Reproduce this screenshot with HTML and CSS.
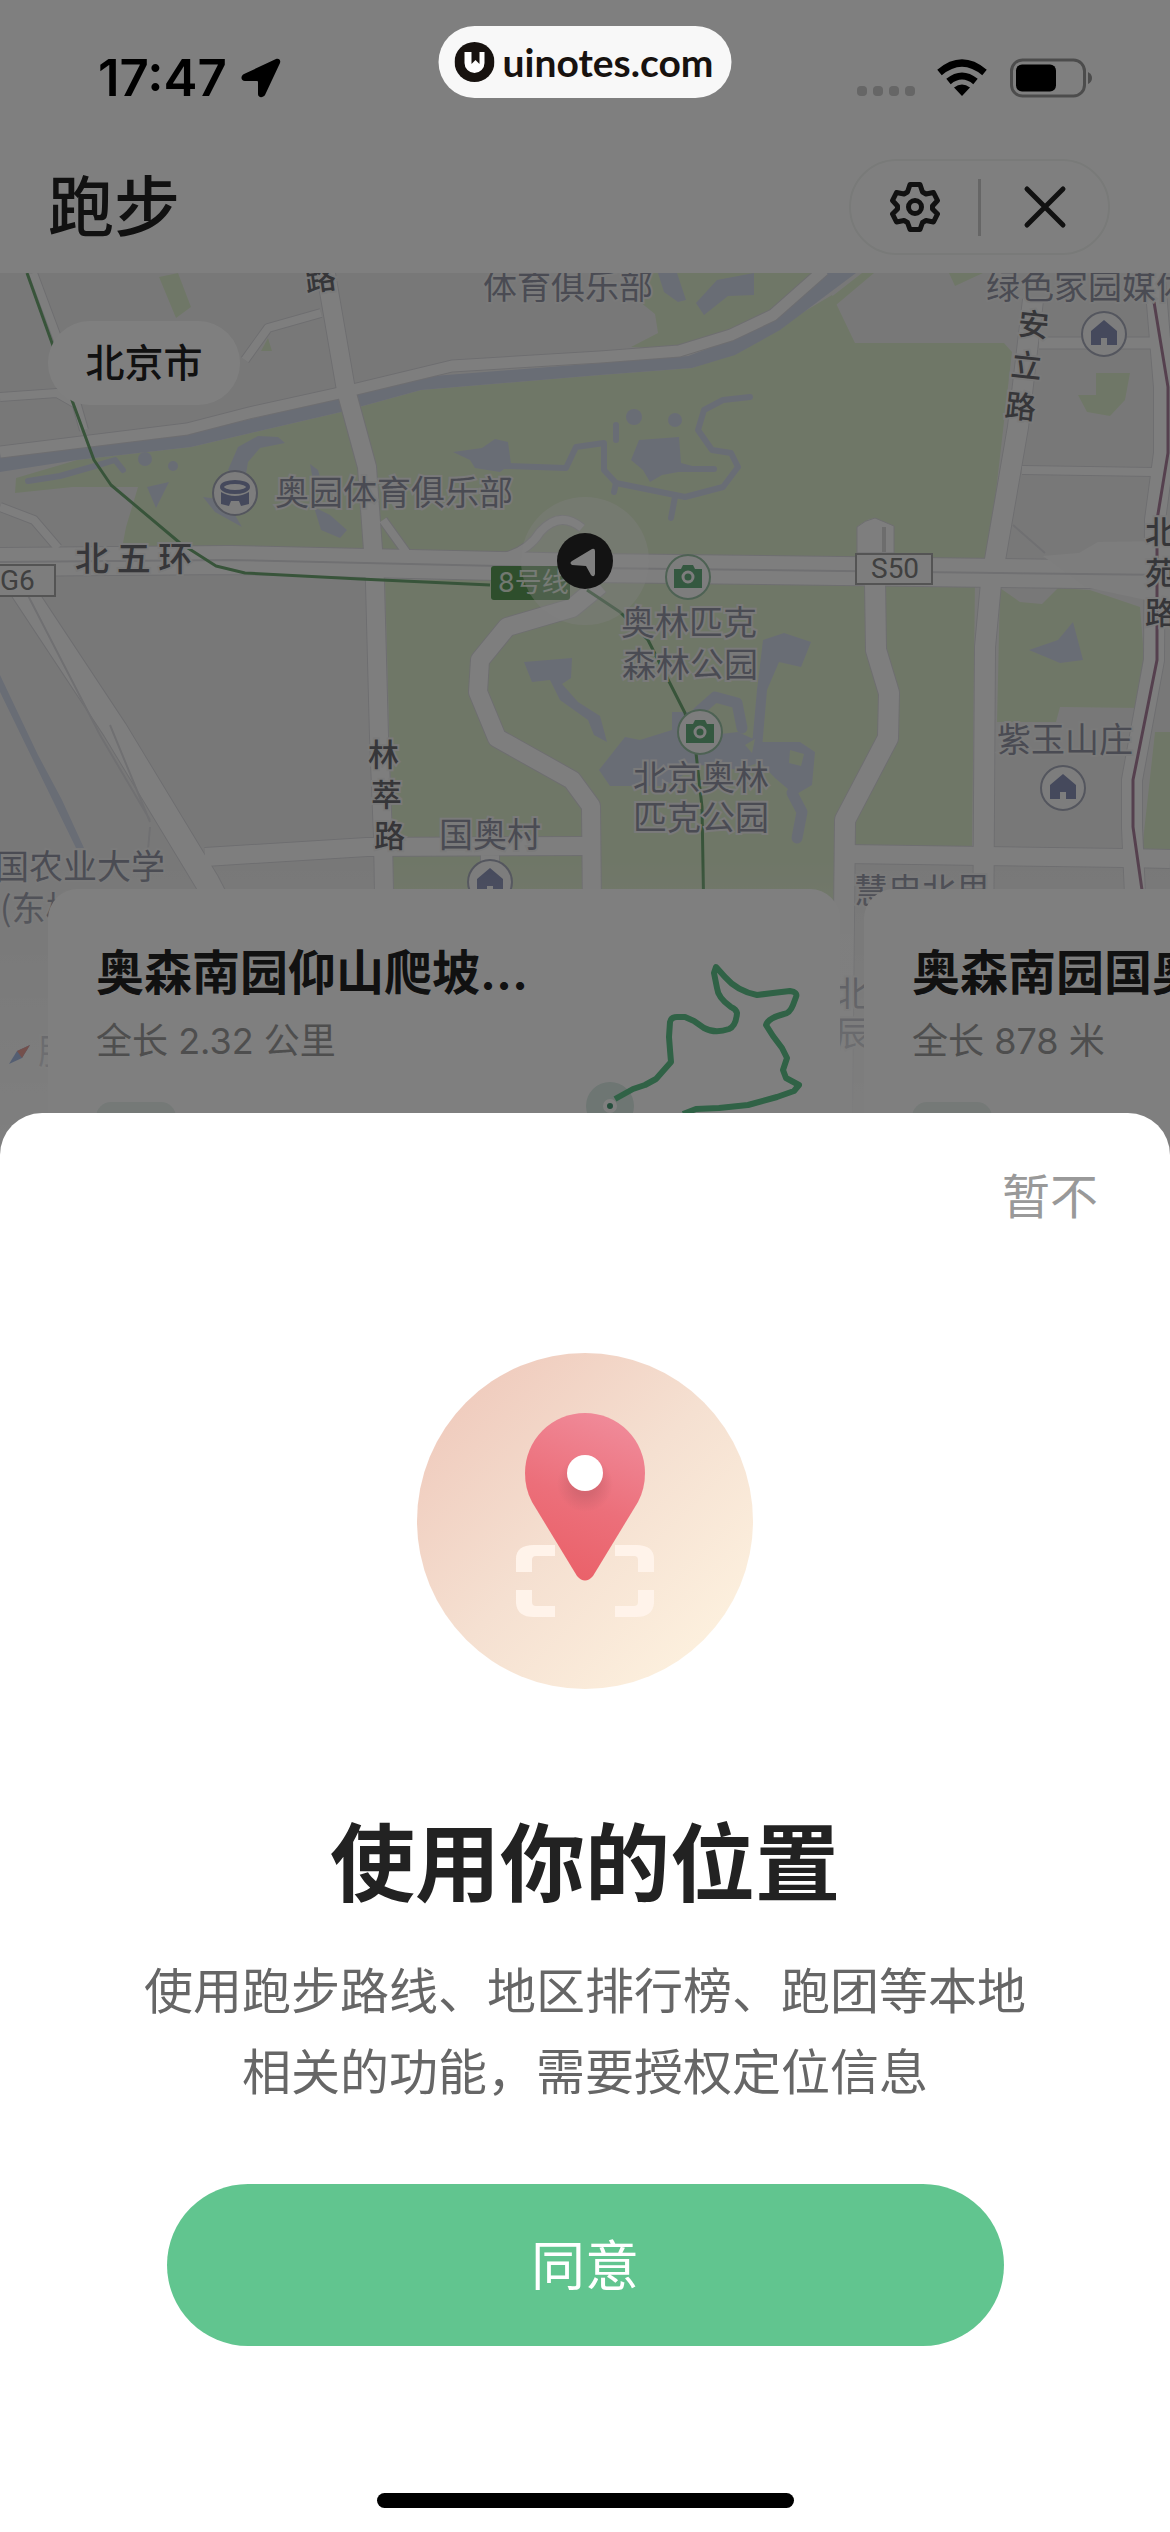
FILE: index.html
```html
<!DOCTYPE html>
<html lang="zh-CN">
<head>
    <meta charset="UTF-8">
    <meta name="viewport" content="width=device-width, initial-scale=1.0">
    <title>跑步</title>
    <link rel="stylesheet" href="styles.css">
</head>
<body>
    <div class="app">
        <div class="status-bar">
            <div class="status-left">
                <span class="time">17:47</span>
                <svg width="40" height="40" viewBox="0 0 40 40"><path d="M35 1 L3 16 C-1 18 0 23 4 23 L16 23 Q17 23 17 24 L17 36 C17 40 22 40 24 37 L39 5 C40 2 38 0 35 1 Z"/></svg>
            </div>
            <div class="status-right">
                <div class="signal"><i></i><i></i><i></i><i></i></div>
                <svg width="52" height="38" viewBox="0 0 52 38">
                    <path d="M26 37 L18 28.500 Q26 22.500 34 28.500 Z"/>
                    <path d="M12.500 22.500 Q26 11.500 39.500 22.500" fill="none" stroke="#000" stroke-width="7"/>
                    <path d="M3.500 13.500 Q26 -5.500 48.500 13.500" fill="none" stroke="#000" stroke-width="7"/>
                </svg>
                <svg width="84" height="40" viewBox="0 0 84 40">
                    <rect x="2.500" y="2" width="73" height="36" rx="11" fill="none" stroke="#999" stroke-width="3"/>
                    <rect x="7" y="6.500" width="40" height="27" rx="6"/>
                    <path d="M79 14 Q83 16 83 20 Q83 24 79 26 Z" fill="#999"/>
                </svg>
            </div>
        </div>

        <header class="header">
            <h1>跑步</h1>
            <div class="capsule">
                <button type="button" aria-label="设置">
                    <svg width="50" height="52" viewBox="0 0 50 52" fill="none" stroke="#222" stroke-width="5" stroke-linejoin="round">
                        <path d="M20 3.500 H30 L32.500 11 L36 13 L43.500 11.500 L47.500 19.500 L42.500 25 V28 L47.500 33 L43.500 41 L36 39.500 L32.500 41.500 L30 48.500 H20 L17.500 41.500 L14 39.500 L6.500 41 L2.500 33 L7.500 28 V25 L2.500 19.500 L6.500 11.500 L14 13 L17.500 11 Z"/>
                        <circle cx="25" cy="26" r="6.500"/>
                    </svg>
                </button>
                <span class="divider"></span>
                <button type="button" aria-label="关闭">
                    <svg width="44" height="44" viewBox="0 0 44 44" fill="none" stroke="#222" stroke-width="5" stroke-linecap="round"><path d="M4 4 L40 40 M40 4 L4 40"/></svg>
                </button>
            </div>
        </header>

        <main class="map">
            <svg class="map-canvas" viewBox="0 273 1170 860" preserveAspectRatio="xMidYMin slice">
                <defs>
                    <g id="poi-home">
                        <circle r="22" fill="#fafafa" stroke="#a8acbc" stroke-width="2"/>
                        <path d="M0 -14 L13 -3 V11 H3 V4 H-3 V11 H-13 V-3 Z" fill="#8a92b8"/>
                    </g>
                    <g id="poi-camera">
                        <circle r="22" fill="#fafafa" stroke="#9cc4a8" stroke-width="2"/>
                        <path d="M-14 -8 H-7 L-5 -12 H5 L7 -8 H14 V11 H-14 Z" fill="#68b080"/>
                        <circle r="5" fill="none" stroke="#fafafa" stroke-width="3"/>
                    </g>
                    <linearGradient id="fade" x1="0" y1="0" x2="0" y2="1">
                        <stop offset="0" stop-color="#fff" stop-opacity="0"/>
                        <stop offset="1" stop-color="#fff" stop-opacity=".92"/>
                    </linearGradient>
                    <g id="roads">
                        <path class="w8" d="M33 273 L59 343 L84 430"/>
                        <path class="w8" d="M0 397 L57 393 L78 405 M245 360 L268 328 L321 313"/>
                        <path class="w8" d="M1022 470 L1154 472 M0 507 L34 520 L58 548 M383 520 L406 552 M500 558 Q528 552 540 532 Q560 510 582 528"/>
                        <path class="w11" d="M0 452 L187 429 L249 413 L344 392 L452 366 L600 357 L679 351 L731 335 L773 315 L824 270"/>
                        <path class="w11" d="M1039 343 L1154 343"/>
                        <path class="w18" d="M325 268 L346 390 L367 467 L373 550 L375 583 L379 737 L383 837 L388 1120"/>
                        <path class="w18" d="M600 585 L572 608 L507 627 L480 660 L478 692 L497 738 L572 780 L591 806 L594 1120"/>
                        <path class="w18" d="M205 857 L367 847 L590 846 M490 850 V870 M845 854 L1125 858 L1170 859"/>
                        <path class="w20" d="M875 580 L876 650 L889 693 L888 738 L845 820 L842 1120"/>
                        <path class="w20" d="M1033 300 L1018 427 L995 560 L991 583 L985 647 L982 1120"/>
                        <path class="w20" d="M1154 268 L1164 387 L1164 453 L1155 520 L1154 660 L1132 780 L1132 827 L1145 1120"/>
                        <path class="w24" d="M0 556 L29 600 L115 730 L207 882 L330 1120"/>
                        <path class="w28" d="M0 562 L230 560 L590 568 L1170 575"/>
                    </g>
                </defs>

                <rect y="273" width="1170" height="860" fill="#f1f1f1"/>

                <g fill="#dfeecf">
                    <path d="M16 478 L77 460 L191 447 L341 412 L421 390 L600 375 L692 368 L735 352 L780 326 L832 295 L855 343 H1004 L1012 352 L987 570 H383 L122 548 L126 527 L138 487 H73 L15 493 Z"/>
                    <path d="M650 273 H826 L770 318 L728 335 L678 350 L631 347 L658 333 L655 314 L640 302 Z"/>
                    <path d="M862 273 H874 L836 305 L830 298 Z M949 273 L983 273 L955 286 Z"/>
                    <path d="M159 277 L178 273 L191 307 L176 318 Z M268 338 L272 351 H261 Z"/>
                    <path d="M1096 373 H1130 L1125 400 L1110 416 L1087 412 L1078 395 H1096 Z"/>
                    <path d="M385 580 H975 L972 847 H848 L835 1120 H400 Z"/>
                    <path d="M1000 588 L1020 602 L1042 604 L1058 588 L1090 590 L1140 607 L1144 657 L1140 708 L1060 707 L1056 722 H997 Z"/>
                    <path d="M1155 732 H1170 V850 H1142 Z"/>
                </g>

                <g fill="#d3daeb">
                    <path d="M0 455 L77 445 L191 433 L341 398 L421 377 L600 363 L688 356 L723 343 L773 318 L826 273 H856 L780 330 L735 355 L692 368 L600 375 L421 390 L341 412 L191 447 L77 460 L0 472 Z"/>
                    <path d="M0 675 L38 755 L62 800 L84 848 H76 L55 805 L34 762 L0 692 Z"/>
                    <path d="M228 470 L238 447 L258 436 L278 437 L285 443 L260 448 L248 462 L245 480 Z M147 487 L169 482 L156 508 Z M203 497 L226 500 L242 527 L215 512 Z M314 507 L330 515 L347 530 L340 538 L321 530 Z M310 464 L318 470 L324 492 L314 486 Z"/>
                    <circle cx="145" cy="459" r="7"/><circle cx="173" cy="466" r="5"/>
                    <path d="M453 452 L482 448 L495 439 L508 442 L511 464 L500 472 L475 468 L470 460 Z"/>
                    <path d="M639 440 L679 437 L681 463 L700 468 L662 475 L650 482 L643 470 L631 460 Z"/>
                    <circle cx="634" cy="417" r="8"/><circle cx="675" cy="420" r="7"/>
                    <path d="M658 273 H677 L686 300 L678 302 L664 292 Z M717 280 L754 273 V295 L728 296 L704 315 L696 303 Z"/>
                    <path d="M599 770 L625 737 L640 740 L672 730 V712 H690 L712 735 L738 732 L760 742 L800 742 L815 752 L812 785 L795 795 L775 778 L760 762 L740 770 L700 765 L665 786 L610 786 Z"/>
                    <path d="M763 640 L784 633 L811 642 L801 667 L779 662 L767 690 L762 748 L752 745 L757 690 Z"/>
                    <path d="M524 662 L572 658 L571 678 L562 684 L578 702 L600 716 L607 742 L594 735 L588 720 L560 700 L550 680 L532 682 Z"/>
                    <path d="M1029 650 L1058 640 L1073 622 L1083 660 L1060 663 Z"/>
                </g>
                <g fill="none" stroke="#d3daeb" stroke-width="6" stroke-linecap="round" stroke-linejoin="round">
                    <path d="M28 481 L60 476 L95 466 L115 460 L123 470"/>
                    <path d="M505 466 L566 468 L576 447 L604 443 V470 L616 483 L685 497 L723 487 L738 467 L731 453 L712 450 L698 430 L704 410 L723 400 L750 397"/>
                    <path d="M616 425 V440 M675 497 L671 518 M679 469 H714 M616 483 L614 492"/>
                    <path d="M698 712 L715 697 L737 703 L742 728" stroke-width="11"/>
                    <path d="M792 793 L802 812 L797 838" stroke-width="11"/>
                </g>
                <path d="M790 750 l14 4 l-3 12 l-12 -3 Z M745 745 l10 -6 l-3 14 Z" fill="#dfeecf"/>

                <g class="road-edge"><use href="#roads"/></g>
                <g class="road-fill"><use href="#roads"/></g>
                <path d="M857 553 V527 Q865 520 875 518 L894 526 V553 Z" fill="#fdfdfd" stroke="#dcdce0"/>
                <path d="M884 527 V552" stroke="#dadada" stroke-width="4"/>
                <path d="M1043 556 L1079 553 L1098 542 L1170 541 V605 L1085 587 Z" fill="#fbfbfb"/>
                <path d="M0 562 L230 560 L590 568 L1170 575 M20 580 L100 735 L150 820 M150 827 L148 850 M1013 525 L1045 553 M110 725 L150 822" fill="none" stroke="#e0e0e4" stroke-width="2"/>

                <g fill="none" stroke="#70a874" stroke-width="3" stroke-linejoin="round">
                    <path d="M27 273 L52 343 L73 403 L94 460 L111 485 L180 543 L216 566 L245 573 L360 579 L490 585"/>
                    <path d="M587 590 L620 612 L648 640 L685 713 L696 753 L702 807 L707 1100"/>
                </g>
                <path d="M1154 302 L1168 387 V453 L1157 520 V660 L1133 780 V827 L1142 890 L1150 1100" fill="none" stroke="#aa819c" stroke-width="3"/>

                <g class="place">
                    <text x="483" y="299">体育俱乐部</text>
                    <text x="986" y="299">绿色家园媒体</text>
                    <text x="275" y="505">奥园体育俱乐部</text>
                    <text x="621" y="635">奥林匹克</text>
                    <text x="622" y="677">森林公园</text>
                    <text x="633" y="790">北京奥林</text>
                    <text x="633" y="830">匹克公园</text>
                    <text x="997" y="752">紫玉山庄</text>
                    <text x="439" y="847">国奥村</text>
                    <text x="-5" y="879">国农业大学</text>
                    <text x="0" y="921">(东校区)</text>
                    <text x="854" y="903">慧忠北里</text>
                    <text x="835" y="1006">北</text>
                    <text x="835" y="1046">辰</text>
                    <text x="38" y="1064">服</text>
                </g>
                <g class="street">
                    <text class="wide" x="75" y="571">北 五 环</text>
                    <text x="305" y="290" transform="rotate(-8 320 280)">路</text>
                    <text x="1018" y="336" transform="rotate(6 1033 325)">安</text>
                    <text x="1011" y="377" transform="rotate(6 1026 366)">立</text>
                    <text x="1005" y="418" transform="rotate(6 1020 407)">路</text>
                    <text x="368" y="766">林</text>
                    <text x="371" y="806">萃</text>
                    <text x="374" y="847">路</text>
                    <text x="1145" y="543">北</text>
                    <text x="1145" y="584">苑</text>
                    <text x="1145" y="624">路</text>
                </g>

                <g fill="#fafafa" stroke="#a8a8a8" stroke-width="2">
                    <rect x="856" y="554" width="76" height="30"/>
                    <rect x="-20" y="565" width="75" height="31"/>
                </g>
                <g class="shield">
                    <text x="871" y="578">S50</text>
                    <text x="0" y="590">G6</text>
                </g>
                <rect x="491" y="566" width="79" height="34" rx="3" fill="#5c9c58"/>
                <text class="metro" x="498" y="592">8号线</text>

                <g transform="translate(235 493)">
                    <circle r="22" fill="#fafafa" stroke="#a8acbc" stroke-width="2"/>
                    <ellipse cy="-6" rx="13" ry="5" fill="none" stroke="#8a92b8" stroke-width="4"/>
                    <path d="M-14 -1 Q0 7 14 -1 V11 L6 13 L4 8 H-4 L-6 13 L-14 11 Z" fill="#8a92b8"/>
                </g>
                <use href="#poi-home" x="1104" y="334"/>
                <use href="#poi-home" x="1063" y="788"/>
                <use href="#poi-home" x="490" y="882"/>
                <use href="#poi-camera" x="688" y="577"/>
                <use href="#poi-camera" x="700" y="732"/>

                <!-- current position -->
                <circle cx="585" cy="561" r="64" fill="#fff" opacity=".38"/>
                <circle cx="585" cy="561" r="28" fill="#262626"/>
                <path d="M572 561 L592 549 Q595 548 595 551 V574 Q594 578 591 575 L586 566 L572 565 Q569 563 572 561 Z" fill="#fff"/>

                <rect y="860" width="1170" height="273" fill="url(#fade)"/>
                <path d="M30 1045 L22 1058 L9 1064 L17 1051 Z" fill="#a8bce4"/>
                <path d="M30 1045 L22 1058 L17 1051 Z" fill="#e8a098"/>
            </svg>

            <button type="button" class="city">北京市</button>

            <div class="routes">
                <article class="route">
                    <div class="route-info">
                        <h2>奥森南园仰山爬坡跑道</h2>
                        <p>全长 2.32 公里</p>
                        <span class="tag"></span>
                    </div>
                    <svg class="track" width="222" height="180" viewBox="582 962 222 180" fill="none">
                        <circle cx="610" cy="1106" r="24" fill="#dcece6"/>
                        <path d="M615 1099 L633 1089 L645 1085 L656 1079 L671 1062 L670 1050 L669 1037 L670 1022 Q671 1017 677 1017 L685 1017 L694 1021 L704 1028 Q715 1034 729 1029 Q736 1026 737 1013 Q736 1009 731 1007 Q718 998 717 988 L714 973 L716 967 L725 977 Q737 991 757 995 L773 993 L790 991 Q798 992 796 997 L793 1005 Q790 1013 784 1014 Q768 1018 766 1025 L773 1036 L782 1048 L787 1058 L783 1070 L786 1078 L799 1085 L794 1091 L777 1097 L748 1105 L719 1108 L696 1109 L683 1114" stroke="#60c48c" stroke-width="6" stroke-linejoin="round"/>
                        <circle cx="610" cy="1106" r="5" fill="#4a9c78" stroke="#fff" stroke-width="4"/>
                    </svg>
                </article>
                <article class="route">
                    <div class="route-info">
                        <h2>奥森南园国奥村环线</h2>
                        <p>全长 878 米</p>
                        <span class="tag"></span>
                    </div>
                </article>
            </div>
        </main>
    </div>

    <div class="overlay">
        <section class="sheet" role="dialog" aria-labelledby="sheet-title">
            <button type="button" class="skip">暂不</button>
            <svg class="pin" width="336" height="336" viewBox="0 0 336 336">
                <defs>
                    <linearGradient id="disc" x1=".15" y1=".15" x2=".85" y2=".85">
                        <stop offset="0" stop-color="#f0cdbf"/>
                        <stop offset=".5" stop-color="#f5e0d1"/>
                        <stop offset="1" stop-color="#fcefdd"/>
                    </linearGradient>
                    <linearGradient id="drop" x1=".7" y1="0" x2=".4" y2="1">
                        <stop offset="0" stop-color="#f08b9a"/>
                        <stop offset=".55" stop-color="#ec6f7a"/>
                        <stop offset="1" stop-color="#ea6169"/>
                    </linearGradient>
                    <radialGradient id="dot-shadow">
                        <stop offset=".4" stop-color="#cc626c" stop-opacity=".7"/>
                        <stop offset="1" stop-color="#cc626c" stop-opacity="0"/>
                    </radialGradient>
                </defs>
                <circle cx="168" cy="168" r="168" fill="url(#disc)"/>
                <path fill="#fff3ea" d="M99 219 V206 Q99 192 117 192 H138 V203 H119 Q115 203 115 207 V219 Z M237 219 V206 Q237 192 219 192 H198 V203 H217 Q221 203 221 207 V219 Z M99 237 V250 Q100 264 117 264 H138 V253 H119 Q115 253 115 249 V237 Z M237 237 V250 Q236 264 219 264 H198 V253 H217 Q221 253 221 249 V237 Z"/>
                <path fill="url(#drop)" d="M108 120 A60 60 0 0 1 228 120 Q228 136 221 149 L176 223 Q168 232 160 223 L115 149 Q108 136 108 120 Z"/>
                <circle cx="168" cy="131" r="28" fill="url(#dot-shadow)"/>
                <circle cx="168" cy="120" r="18" fill="#fff"/>
            </svg>
            <h2 id="sheet-title">使用你的位置</h2>
            <p class="desc">使用跑步路线、地区排行榜、跑团等本地<br>相关的功能，需要授权定位信息</p>
            <button type="button" class="agree">同意</button>
            <div class="home-indicator"></div>
        </section>
    </div>

    <a class="badge" href="#">
        <svg width="40" height="40" viewBox="0 0 40 40">
            <circle cx="20" cy="20" r="20" fill="#17120f"/>
            <path d="M10 10 H17 V22 L21 18 L25 22 V10 H30 V21 A10 10 0 0 1 10 21 Z" fill="#fff"/>
        </svg>
        uinotes.com
    </a>
</body>
</html>
```

FILE: styles.css
```css
* {
    box-sizing: border-box;
}

body {
    margin: 0;
    position: relative;
    height: 100vh;
    overflow: hidden;
    font-family: Inter, "Noto Sans CJK SC", sans-serif;
    color: #222;
    background: #fff;
}

h1,
h2,
p {
    margin: 0;
}

button {
    padding: 0;
    border: none;
    background: none;
    font-family: inherit;
    cursor: pointer;
}

svg {
    display: block;
    flex-shrink: 0;
}

.app {
    display: flex;
    flex-direction: column;
    height: 100%;
}

/* status bar */
.status-bar {
    display: flex;
    justify-content: space-between;
    align-items: center;
    height: 141px;
    padding: 14px 77px 0 98px;
    color: #000;
}

.status-left,
.status-right {
    display: flex;
    align-items: center;
}

.status-left {
    gap: 14px;
}

.status-right {
    gap: 21px;
}

.time {
    font-size: 51px;
    font-weight: 600;
}

.signal {
    display: flex;
    gap: 6px;
    margin-top: 26px;
}

.signal i {
    width: 10px;
    height: 10px;
    border-radius: 4px;
    background: #ccc;
}

/* header */
.header {
    display: flex;
    justify-content: space-between;
    align-items: center;
    height: 132px;
    padding: 0 60px 0 48px;
}

.header h1 {
    font-size: 66px;
    font-weight: 500;
    line-height: 72px;
}

.capsule {
    display: flex;
    align-items: center;
    width: 261px;
    height: 96px;
    border: 2px solid #f2f5f2;
    border-radius: 48px;
}

.capsule button {
    display: flex;
    flex: 1;
    justify-content: center;
}

.divider {
    width: 3px;
    height: 57px;
    background: #ccc;
}

/* map */
.map {
    position: relative;
    flex: 1;
    overflow: hidden;
}

.map-canvas {
    width: 100%;
    height: 860px;
}

.road-edge,
.road-fill {
    fill: none;
    stroke-linejoin: round;
}

/* the edge is the same road drawn two pixels wider */
.road-edge {
    stroke: #dcdce0;
    --edge: 2px;
}

.road-fill {
    stroke: #fdfdfd;
    --edge: 0px;
}

.w8 { stroke-width: calc(8px + var(--edge)); }
.w11 { stroke-width: calc(11px + var(--edge)); }
.w18 { stroke-width: calc(18px + var(--edge)); }
.w20 { stroke-width: calc(20px + var(--edge)); }
.w24 { stroke-width: calc(24px + var(--edge)); }
.w28 { stroke-width: calc(28px + var(--edge)); }

.place,
.street {
    font-family: "Noto Sans CJK SC", sans-serif;
    font-size: 34px;
    fill: #9497a6;
    stroke: #f4f4f4;
    stroke-width: 4px;
    paint-order: stroke;
}

.street {
    font-size: 31px;
    font-weight: 500;
    fill: #6c6c72;
}

.street .wide {
    font-size: 34px;
}

.shield {
    font-family: Roboto, sans-serif;
    font-size: 28px;
    fill: #808080;
}

.metro {
    font-size: 27px;
    fill: #e4f0e0;
}

.city {
    position: absolute;
    top: 48px;
    left: 48px;
    width: 192px;
    height: 84px;
    padding-bottom: 6px;
    border-radius: 42px;
    background: #fff;
    color: #222;
    font-size: 39px;
    font-weight: 500;
}

.routes {
    position: absolute;
    top: 616px;
    left: 48px;
    display: flex;
    gap: 24px;
}

.route {
    display: flex;
    justify-content: space-between;
    width: 792px;
    height: 360px;
    padding: 48px 36px 48px 48px;
    border-radius: 30px;
    background: #fff;
}

.route-info {
    width: 436px;
}

.route h2 {
    overflow: hidden;
    font-size: 48px;
    font-weight: 700;
    line-height: 72px;
    text-overflow: ellipsis;
    white-space: nowrap;
}

.route p {
    color: #9c9c9c;
    font-size: 36px;
    line-height: 64px;
}

.tag {
    display: block;
    width: 80px;
    height: 48px;
    margin-top: 29px;
    border-radius: 15px;
    background: #eaf3ef;
}

.track {
    margin-top: 25px;
}

/* permission sheet */
.overlay {
    position: absolute;
    inset: 0;
    display: flex;
    flex-direction: column;
    justify-content: flex-end;
    background: rgba(0, 0, 0, 0.5);
}

.sheet {
    display: flex;
    flex-direction: column;
    align-items: center;
    padding: 54px 72px 24px;
    border-radius: 42px 42px 0 0;
    background: #fff;
}

.skip {
    align-self: flex-end;
    color: #999;
    font-size: 48px;
    line-height: 60px;
}

.pin {
    margin-top: 126px;
}

.sheet h2 {
    margin-top: 116px;
    font-size: 85px;
    font-weight: 700;
    line-height: 120px;
}

.desc {
    margin-top: 26px;
    color: #666;
    font-size: 49px;
    line-height: 81px;
    text-align: center;
}

.agree {
    width: 837px;
    max-width: 100%;
    height: 162px;
    margin-top: 71px;
    padding-bottom: 6px;
    border-radius: 81px;
    background: #61c58f;
    color: #fff;
    font-size: 54px;
}

.home-indicator {
    width: 417px;
    height: 15px;
    margin-top: 147px;
    border-radius: 8px;
    background: #000;
}

.badge {
    position: absolute;
    top: 26px;
    left: 50%;
    display: flex;
    align-items: center;
    gap: 8px;
    width: 293px;
    height: 72px;
    padding: 0 16px;
    border-radius: 36px;
    background: #f8f8f8;
    color: #17120f;
    font-family: Lato, sans-serif;
    font-size: 39px;
    font-weight: 700;
    text-decoration: none;
    transform: translateX(-50%);
}
```
